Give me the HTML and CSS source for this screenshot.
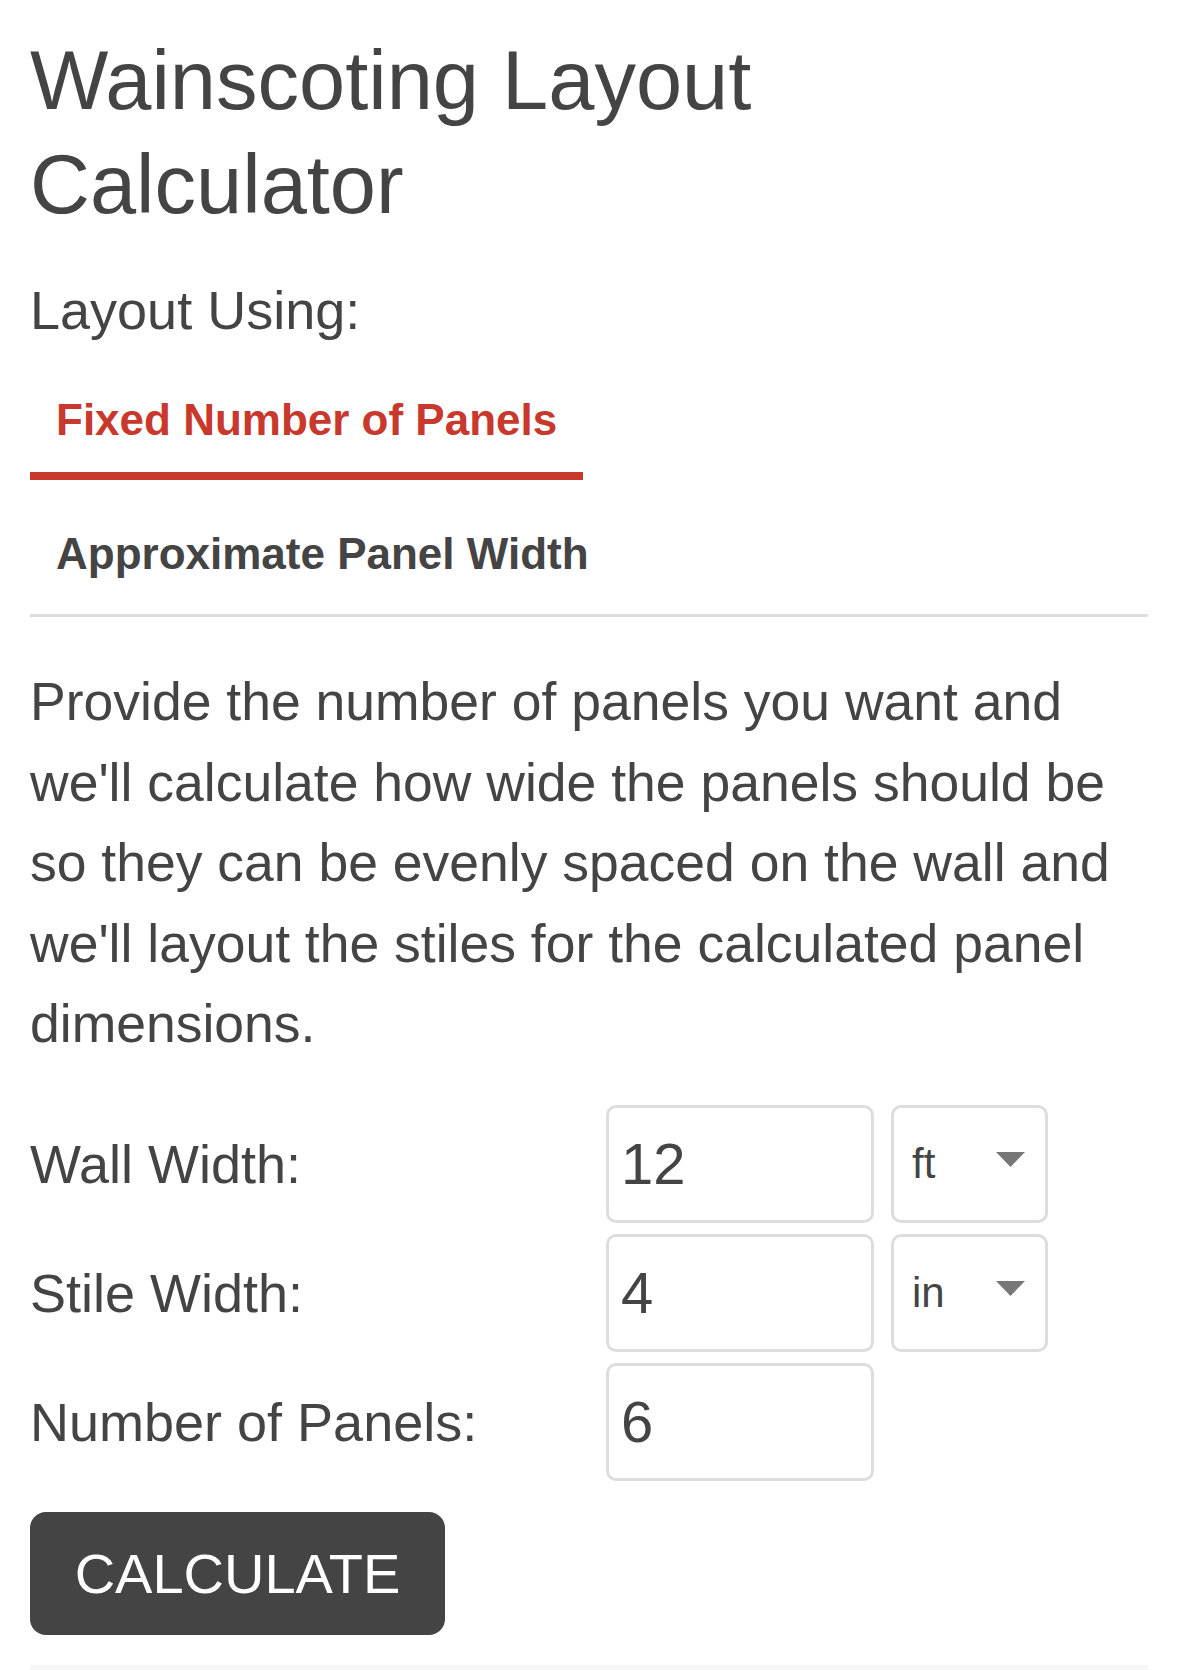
FILE: index.html
```html
<!DOCTYPE html>
<html lang="en">
<head>
<meta charset="utf-8">
<title>Wainscoting Layout Calculator</title>
<link rel="stylesheet" href="styles.css">
</head>
<body>
<main class="page">
  <h1 class="title">Wainscoting Layout Calculator</h1>
  <div class="using">Layout Using:</div>
  <nav class="tabs">
    <a class="tab tab-active">Fixed Number of Panels</a>
    <a class="tab">Approximate Panel Width</a>
  </nav>
  <p class="intro">Provide the number of panels you want and we'll calculate how wide the panels should be so they can be evenly spaced on the wall and we'll layout the stiles for the calculated panel dimensions.</p>
  <form class="form">
    <label class="label">Wall Width:</label>
    <input class="field" type="text" value="12">
    <div class="select"><span>ft</span><svg class="caret" width="29" height="15" viewBox="0 0 29 15"><path d="M0 0H29L14.5 15Z" fill="#777"/></svg></div>

    <label class="label">Stile Width:</label>
    <input class="field" type="text" value="4">
    <div class="select"><span>in</span><svg class="caret" width="29" height="15" viewBox="0 0 29 15"><path d="M0 0H29L14.5 15Z" fill="#777"/></svg></div>

    <label class="label">Number of Panels:</label>
    <input class="field" type="text" value="6">
    <div class="empty"></div>
  </form>
  <button class="calc" type="button">CALCULATE</button>
  <div class="results"></div>
</main>
</body>
</html>
```

FILE: styles.css
```css
html, body {
  margin: 0;
  padding: 0;
  background: #ffffff;
}

body {
  font-family: "Liberation Sans", Arial, sans-serif;
  color: #444444;
}

.page {
  padding: 29px 31px 0 30px;
}

.title {
  margin: 0;
  max-width: 860px;
  font-size: 83px;
  font-weight: 400;
  line-height: 104px;
  color: #444444;
}

.using {
  margin-top: 41px;
  font-size: 54px;
  line-height: 64px;
  margin-bottom: 4px;
}

.tabs {
  display: flex;
  flex-wrap: wrap;
  border-bottom: 3px solid #dddddd;
}

.tab {
  display: block;
  padding: 48px 26px 26px 26px;
  font-size: 44px;
  font-weight: 700;
  line-height: 52px;
  color: #444444;
  border-bottom: 8px solid transparent;
  white-space: nowrap;
}

.tab-active {
  color: #c9382c;
  border-bottom-color: #c9382c;
}

.intro {
  margin: 45px 0 0 0;
  font-size: 53.5px;
  line-height: 80.5px;
}

.form {
  margin-top: 40px;
  display: grid;
  grid-template-columns: 559px 268px 157px;
  grid-auto-rows: 118px;
  column-gap: 17px;
  row-gap: 11px;
  align-items: center;
}

.label {
  font-size: 54px;
}

.field {
  box-sizing: border-box;
  width: 268px;
  height: 118px;
  margin: 0;
  padding: 0 12px;
  border: 3px solid #dddddd;
  border-radius: 10px;
  font-family: "Liberation Sans", Arial, sans-serif;
  font-size: 58px;
  color: #444444;
  background: #ffffff;
  outline: none;
}

.select {
  box-sizing: border-box;
  height: 118px;
  display: flex;
  align-items: center;
  justify-content: space-between;
  padding: 0 20px 0 18px;
  border: 3px solid #dddddd;
  border-radius: 10px;
  font-size: 42px;
  color: #444444;
}

.caret {
  display: block;
  margin-bottom: 8px;
}

.calc {
  margin-top: 31px;
  display: block;
  width: 415px;
  height: 123px;
  padding: 0;
  border: none;
  border-radius: 16px;
  background: #444444;
  color: #ffffff;
  font-family: "Liberation Sans", Arial, sans-serif;
  font-size: 56px;
  cursor: pointer;
}

.results {
  margin-top: 30px;
  height: 120px;
  background: #f6f6f6;
}
```
